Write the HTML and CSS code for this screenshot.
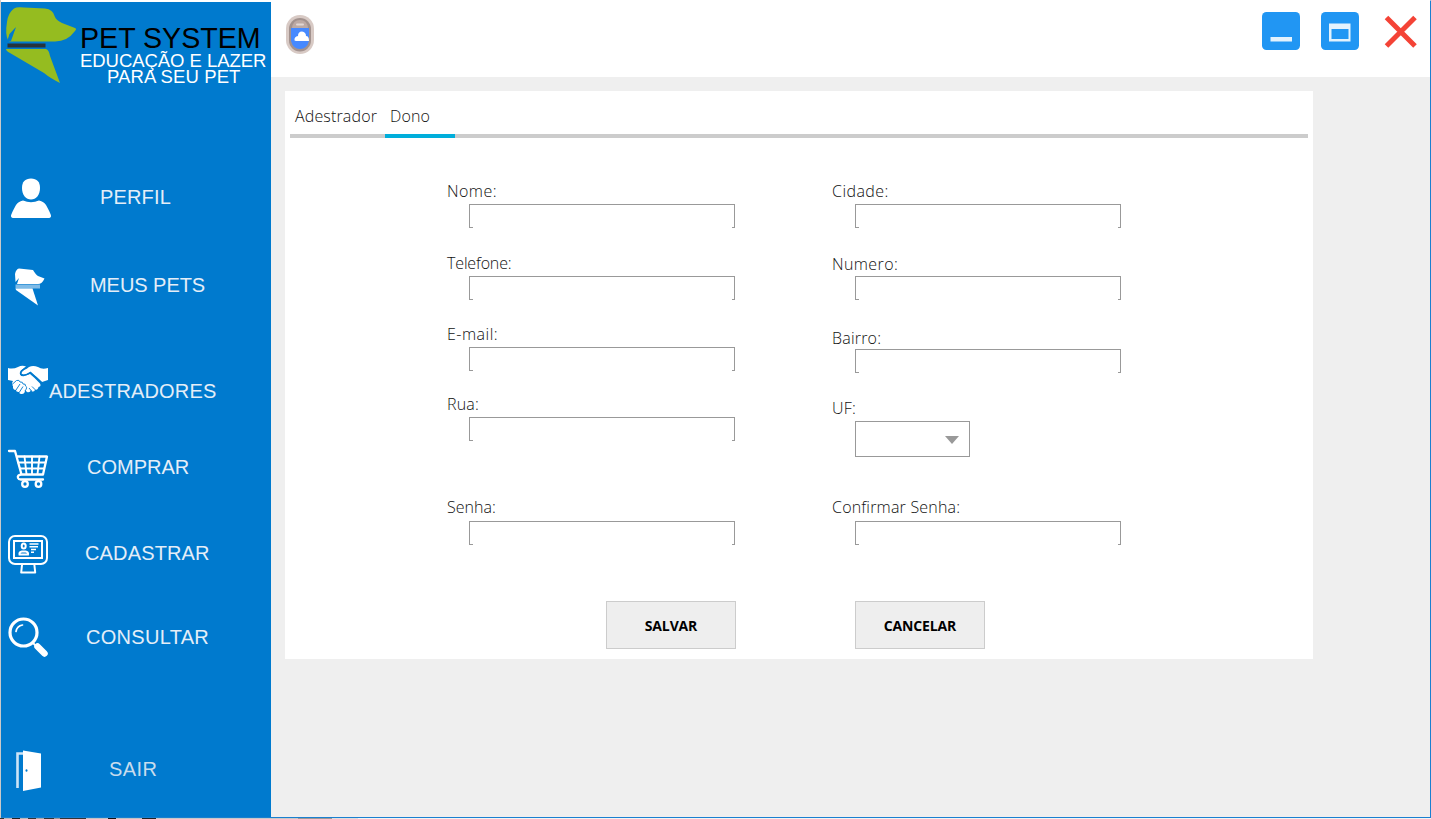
FILE: index.html
```html
<!DOCTYPE html>
<html lang="pt-BR">
<head>
<meta charset="utf-8">
<title>Pet System</title>
<link rel="stylesheet" href="styles.css">
</head>
<body>
<div class="window">
  <aside class="sidebar">
    <div class="brand">
      <svg class="brand-logo" width="78" height="84" viewBox="0 0 78 84">
        <path fill="#95bc20" d="M7 22Q8 13 14 8.500Q17 6.500 24 7.500L45 8.500Q53 9 55 17Q56 20 62 23L75 28Q77 29 75 31Q67 42 54 41.500L9 41.500L15.500 28L10 34L8 40Q5 34 7 22Z"/>
        <path fill="#007ace" d="M7 42L9.500 34L16 27L11 41Z"/>
        <path fill="#26333c" d="M7.500 43.500H45.500V47.500H7.500Z"/>
        <path fill="#95bc20" d="M6 49H46Q49 50 50 56L60 83Q50 78 44 73L10 53Q6 51 6 49Z"/>
      </svg>
      <div class="brand-text">
        <div class="brand-name">PET SYSTEM</div>
        <div class="brand-line">EDUCAÇÃO E LAZER</div>
        <div class="brand-line brand-line-last">PARA SEU PET</div>
      </div>
    </div>
    <nav class="nav">
      <a class="item perfil">
        <svg width="42" height="42" viewBox="0 0 42 42" fill="#fff"><path d="M21 0.500C27 0.500 30 4 30 10C30 17 26 21.500 21 21.500C16 21.500 12 17 12 10C12 4 15 0.500 21 0.500Z"/><path d="M13 22.500Q21 26 29 22.500Q34 23.500 36 27Q41 36 41 38Q41 40 38 40H4Q1 40 1 38Q1 36 6 27Q8 23.500 13 22.500Z"/></svg>
        <span>PERFIL</span></a>
      <a class="item pets">
        <svg width="42" height="42" viewBox="0 0 42 42" fill="#fff"><path d="M6 8Q7 3 10 2.500L24 4Q27 9 29 10L35.500 12.500Q33 18 29 18H8L10 12L6.500 16Z"/><path d="M6.500 18.500H31V22.500H6.500Z" fill="#7fbbe7"/><path d="M6.500 22.500H23.500L29 39.500L7 24Z"/></svg>
        <span>MEUS PETS</span></a>
      <a class="item adestradores">
        <svg width="42" height="32" viewBox="0 0 42 32">
          <path fill="#fff" d="M1 3Q6 4.500 11 2Q15 0 19 1.500L14 5.500Q11 9 15 10.500Q18 11.500 23 9Q28 13 33 18.500Q34.500 21.500 31.500 22Q31 25 28 25Q27 27 25 26.500L24 25Q23 28 20 27L18 25Q18 29.500 14 29Q12 29 12.500 27Q9 27.500 9 25Q5.500 25 6 21Q4 19 6 16L1 15Z"/>
          <path fill="#fff" d="M17 5Q20 4 22 2Q26 0 31 2Q35 5 41 3V15L35 17Q29 11 23 7Q18 10.500 15 9Q13 8 17 5Z"/>
          <path fill="none" stroke="#007ace" stroke-width="1.500" d="M19 2.500L14.500 6Q12 10.500 16.500 10.500Q20 10 23.500 7.500L35 18"/>
          <path fill="none" stroke="#007ace" stroke-width="0.900" d="M5 19.500L9.500 15.500Q12.500 14.500 13 17Q16 16.500 16 19Q19 18.500 18.500 21Q21 22 18 26M9 25L13 19M12.500 27L16 21.500M22 23L24.500 26M25 21.500L28.500 25"/>
        </svg>
        <span>ADESTRADORES</span></a>
      <a class="item comprar">
        <svg width="42" height="40" viewBox="0 0 42 40" fill="none" stroke="#fff" stroke-width="2.300" stroke-linecap="round" stroke-linejoin="round"><path d="M2 2H8L14.500 25.500H36L40 7.500H10M14.500 25.500Q10 26 11 29Q11.500 30.500 14 30.500H36"/><path stroke-width="1.900" d="M11 13.500H38.500M13 19.500H37M17.500 7.500L19.500 25M25 7.500V25M32.500 7.500L30.500 25"/><circle cx="18" cy="35" r="2.800"/><circle cx="31.500" cy="35" r="2.800"/></svg>
        <span>COMPRAR</span></a>
      <a class="item cadastrar">
        <svg width="42" height="40" viewBox="0 0 42 40" fill="none" stroke="#fff" stroke-width="2"><rect x="2" y="2" width="38" height="28" rx="6"/><rect x="7" y="7" width="28" height="17"/><path d="M15 31L14.200 38.500H28.200L27.400 31" stroke-linejoin="round"/><ellipse cx="16.700" cy="12" rx="2" ry="2.600"/><path d="M12.500 20.500Q12 18 15 17.500H18.500Q21.500 18 21 20.500Z"/><path stroke-width="1.400" d="M22.500 10H31.500M22.500 12.800H31M24 15.500H29M24 18.200H27"/></svg>
        <span>CADASTRAR</span></a>
      <a class="item consultar">
        <svg width="42" height="42" viewBox="0 0 42 42" fill="none" stroke="#fff" stroke-linecap="round"><circle cx="16.500" cy="15.500" r="13.500" stroke-width="3.200"/><path stroke-width="1.700" d="M9 14.500Q10 9 15.500 8"/><path stroke-width="1.800" d="M26 26L29 29"/><path stroke-width="6.500" d="M30.500 29.500L37.500 36.500"/></svg>
        <span>CONSULTAR</span></a>
      <a class="item sair">
        <svg width="42" height="42" viewBox="0 0 42 42"><path fill="none" stroke="#cce4f7" stroke-width="2.600" d="M10.500 38V3.500H16"/><path fill="#fff" d="M16 0.500L34 3.500V37.500L16 41Z"/><ellipse cx="19.500" cy="20.500" rx="1" ry="1.300" fill="#007ace"/></svg>
        <span>SAIR</span></a>
    </nav>
  </aside>
  <div class="main">
    <header class="topbar">
      <svg class="plane" width="30" height="42" viewBox="0 0 30 42">
        <rect x="1" y="1" width="28" height="39" rx="14" fill="#d8cac5"/>
        <rect x="4" y="4" width="22" height="33.500" rx="11" fill="#a2928e"/>
        <path fill="#bdaaa4" d="M7 14V14Q8 6 15 6Q22 6 23 14Z"/>
        <path fill="#4689ff" d="M6 14H24V27Q22 35 15 35Q8 35 6 27Z"/>
        <rect x="11" y="9.500" width="8" height="2" rx="1" fill="#e2d7d3"/>
        <path fill="#fff" d="M9.500 26.500Q9 22.500 13 22Q13 17.500 17 17.500Q21 18 21 22Q24 22 24 27H11Z"/>
      </svg>
      <div class="controls">
        <svg width="38" height="38" viewBox="0 0 38 38"><rect width="38" height="38" rx="4.500" fill="#2196f3"/><rect x="8.500" y="25" width="21.500" height="4.500" fill="#e3f2fd"/></svg>
        <svg width="38" height="38" viewBox="0 0 38 38"><rect width="38" height="38" rx="4.500" fill="#2196f3"/><path fill="#e3f2fd" fill-rule="evenodd" d="M8 11.500H29.500V29.500H8ZM10.500 17V27H27.500V17Z"/></svg>
        <svg class="close" width="34" height="34" viewBox="0 0 34 34"><path stroke="#f44336" stroke-width="5" d="M2.500 2.500L31 31M31 2.500L2.500 31"/></svg>
      </div>
    </header>
    <section class="panel">
      <div class="tabs">
        <div class="tab">Adestrador</div>
        <div class="tab active">Dono</div>
      </div>
      <form class="form">
        <div class="column">
          <div class="field nome"><label>Nome:</label><div class="input"></div></div>
          <div class="field telefone"><label>Telefone:</label><div class="input"></div></div>
          <div class="field email"><label>E-mail:</label><div class="input"></div></div>
          <div class="field rua"><label>Rua:</label><div class="input"></div></div>
          <div class="field senha"><label>Senha:</label><div class="input"></div></div>
          <button class="button save" type="button">SALVAR</button>
        </div>
        <div class="column">
          <div class="field cidade"><label>Cidade:</label><div class="input"></div></div>
          <div class="field numero"><label>Numero:</label><div class="input"></div></div>
          <div class="field bairro"><label>Bairro:</label><div class="input"></div></div>
          <div class="field uf"><label>UF:</label><div class="select"><svg width="14" height="8" viewBox="0 0 14 8"><path fill="#999" d="M0 0H14L7 8Z"/></svg></div></div>
          <div class="field confirmar"><label>Confirmar Senha:</label><div class="input"></div></div>
          <button class="button cancel" type="button">CANCELAR</button>
        </div>
      </form>
    </section>
  </div>
</div>
<div class="desktop-edge"></div>
</body>
</html>
```
FILE: styles.css
```css
* { box-sizing: border-box; }
body {
  margin: 0;
  width: 1431px;
  height: 819px;
  overflow: hidden;
  background: #c9c9c9;
  font-family: "Open Sans", "Noto Sans", sans-serif;
}
svg { display: block; flex: none; }
.window {
  display: flex;
  margin-left: 1px;
  width: 1430px;
  height: 818px;
  border-right: 1px solid #1a7fd0;
  border-bottom: 1px solid #1a7fd0;
  border-top: 1px solid #fff;
  background: #efefef;
}
.desktop-edge {
  height: 1px;
  background: linear-gradient(90deg, #333 0 4px, #bbb 4px 12px, #222 12px 20px, #bbb 20px 28px, #333 28px 36px, #aaa 36px 44px, #333 44px 54px, #999 54px 60px, #333 60px 86px, #c4c4c4 86px 108px, #111 108px 116px, #c4c4c4 116px 142px, #222 142px 156px, #c9c9c9 156px 298px, #999 298px 332px, #dedede 332px 358px, #f4f4f4 358px);
}
.sidebar {
  width: 270px;
  border-top: 1px solid #fff;
  background: #007ace;
  font-family: "Liberation Sans", Arial, sans-serif;
}
.brand { display: flex; height: 176px; }
.brand-logo { margin: -2px 0 0 -1px; }
.brand-text { padding: 21px 0 0 2px; white-space: nowrap; }
.brand-name { font-size: 28.6px; line-height: 30px; color: #000; }
.brand-line { font-size: 18.5px; line-height: 16px; letter-spacing: -0.05px; color: #fff; }
.brand-line-last { padding-left: 27px; letter-spacing: 0.1px; }

.item {
  display: flex;
  padding-left: 6px;
  font-size: 20px;
  letter-spacing: 0.15px;
  line-height: 24px;
  color: #e4eef8;
  white-space: nowrap;
}
.item span { display: block; }
.perfil { padding-left: 9px; height: 88px; }
.perfil span { padding: 7px 0 0 48px; }
.pets { padding-left: 8px; height: 99px; }
.pets span { padding: 7px 0 0 39px; letter-spacing: -0.05px; }
.adestradores { height: 84px; }
.adestradores span { padding: 14px 0 0 0; }
.comprar { height: 85px; }
.comprar span { padding: 6px 0 0 38px; letter-spacing: 0; }
.cadastrar { height: 83px; }
.cadastrar span { padding: 7px 0 0 36px; }
.consultar { height: 133px; }
.consultar span { padding: 8px 0 0 37px; letter-spacing: 0.3px; }
.sair span { padding: 7px 0 0 60px; letter-spacing: 0.4px; color: #c8dced; }

.main { flex: 1; }
.topbar {
  display: flex;
  justify-content: space-between;
  height: 76px;
  padding: 13px 13px 0 14px;
  background: #fff;
}
.controls { display: flex; gap: 21px; margin-top: -2px; }
.controls svg { position: relative; left: 1px; }
.close { margin: 3px 0 0 4px; }
.panel {
  width: 1028px;
  height: 568px;
  margin: 14px 0 0 14px;
  padding: 0 5px;
  background: #fff;
}
.tabs {
  display: flex;
  height: 47px;
  border-bottom: 4px solid #ccc;
}
.tab {
  width: 95px;
  height: 47px;
  padding: 15px 0 0 5px;
  font-size: 16px;
  font-weight: 300;
  letter-spacing: 0.15px;
  line-height: 20px;
  color: #111;
}
.tab.active { width: 70px; border-bottom: 4px solid #00aedb; }
.form { display: flex; padding-left: 157px; }
.column { width: 385px; }
.field { width: 289px; }
.field label {
  display: block;
  height: 23px;
  font-size: 16px;
  font-weight: 300;
  letter-spacing: 0.2px;
  line-height: 20px;
  color: #111;
}
.telefone label { letter-spacing: -0.15px; }
.email label { letter-spacing: 0.5px; }
.input {
  width: 266px;
  height: 24px;
  margin-left: 22px;
  border: 1px solid #999;
  border-bottom: 0;
  background: linear-gradient(#999, #999) left bottom / 3px 1px no-repeat, linear-gradient(#999, #999) right bottom / 2px 1px no-repeat;
}
.nome, .cidade { margin-top: 43px; }
.nome label, .cidade label { letter-spacing: 0.45px; }
.telefone { margin-top: 25px; }
.email { margin-top: 24px; }
.rua { margin-top: 23px; }
.senha { margin-top: 56px; }
.senha label, .confirmar label { height: 24px; }
.senha label { letter-spacing: 0; }
.numero { margin-top: 26px; }
.numero label { height: 22px; letter-spacing: 0.4px; }
.bairro { margin-top: 28px; }
.bairro label { height: 21px; }
.uf { margin-top: 25px; }
.select {
  width: 115px;
  height: 36px;
  margin-left: 22px;
  padding: 14px 0 0 89px;
  border: 1px solid #999;
}
.confirmar { margin-top: 40px; }
.column + .column .input, .column + .column .select { margin-left: 23px; }
.button {
  display: block;
  width: 130px;
  height: 48px;
  margin-top: 56px;
  padding: 0;
  border: 1px solid #ccc;
  background: #eee;
  font: 700 14px "Open Sans", "Noto Sans", sans-serif;
  letter-spacing: -0.15px;
  color: #000;
}
.save { margin-left: 159px; }
.cancel { margin-left: 23px; }
```
